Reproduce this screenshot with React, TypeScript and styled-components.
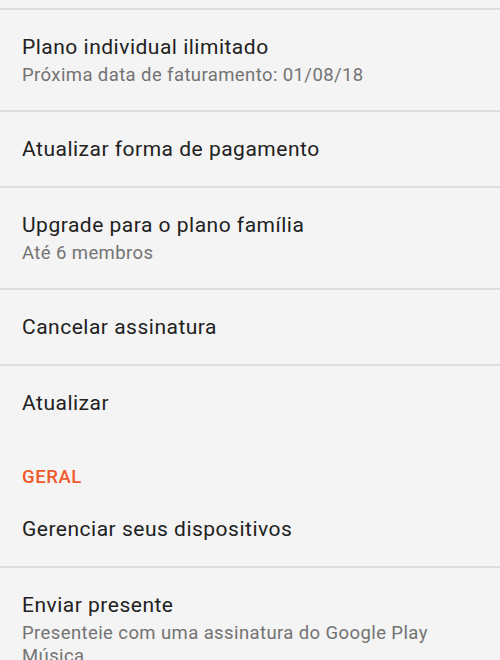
import React from "react";
import styled, { createGlobalStyle } from "styled-components";

const GlobalStyle = createGlobalStyle`
  html, body {
    margin: 0;
    padding: 0;
    background: #f4f4f4;
  }
  body {
    font-family: Roboto, "Noto Sans", Arial, sans-serif;
    -webkit-font-smoothing: antialiased;
  }
`;

const Page = styled.div`
  width: 500px;
  height: 660px;
  overflow: hidden;
  background: #f4f4f4;
  padding-top: 8px;
  box-sizing: border-box;
`;

const Row = styled.div<{ $divider?: boolean }>`
  display: flex;
  flex-direction: column;
  padding: ${({ $divider }) => ($divider ? "23px" : "25px")} 14px 23px 22px;
  border-top: ${({ $divider }) => ($divider ? "2px solid #dddddd" : "none")};
`;

const Title = styled.div`
  font-size: 21px;
  line-height: 28px;
  letter-spacing: 0.5px;
  color: #212121;
`;

const Subtitle = styled.div`
  margin-top: 3px;
  font-size: 18.5px;
  line-height: 23px;
  letter-spacing: 0.4px;
  color: #737373;
`;

const SectionHeader = styled.div`
  padding: 26px 22px 2px;
  font-size: 18.5px;
  line-height: 22px;
  font-weight: 500;
  color: #f05a2b;
  letter-spacing: 0.6px;
`;

type Item = { title: string; subtitle?: string; divider?: boolean };

const account: Item[] = [
  {
    title: "Plano individual ilimitado",
    subtitle: "Próxima data de faturamento: 01/08/18",
    divider: true,
  },
  { title: "Atualizar forma de pagamento", divider: true },
  { title: "Upgrade para o plano família", subtitle: "Até 6 membros", divider: true },
  { title: "Cancelar assinatura", divider: true },
  { title: "Atualizar", divider: true },
];

const general: Item[] = [
  { title: "Gerenciar seus dispositivos" },
  {
    title: "Enviar presente",
    subtitle: "Presenteie com uma assinatura do Google Play Música",
    divider: true,
  },
];

function SettingRow({ item }: { item: Item }) {
  return (
    <Row $divider={item.divider}>
      <Title>{item.title}</Title>
      {item.subtitle && <Subtitle>{item.subtitle}</Subtitle>}
    </Row>
  );
}

export default function App() {
  return (
    <Page>
      <GlobalStyle />
      {account.map((item) => (
        <SettingRow key={item.title} item={item} />
      ))}
      <SectionHeader>GERAL</SectionHeader>
      {general.map((item) => (
        <SettingRow key={item.title} item={item} />
      ))}
    </Page>
  );
}
